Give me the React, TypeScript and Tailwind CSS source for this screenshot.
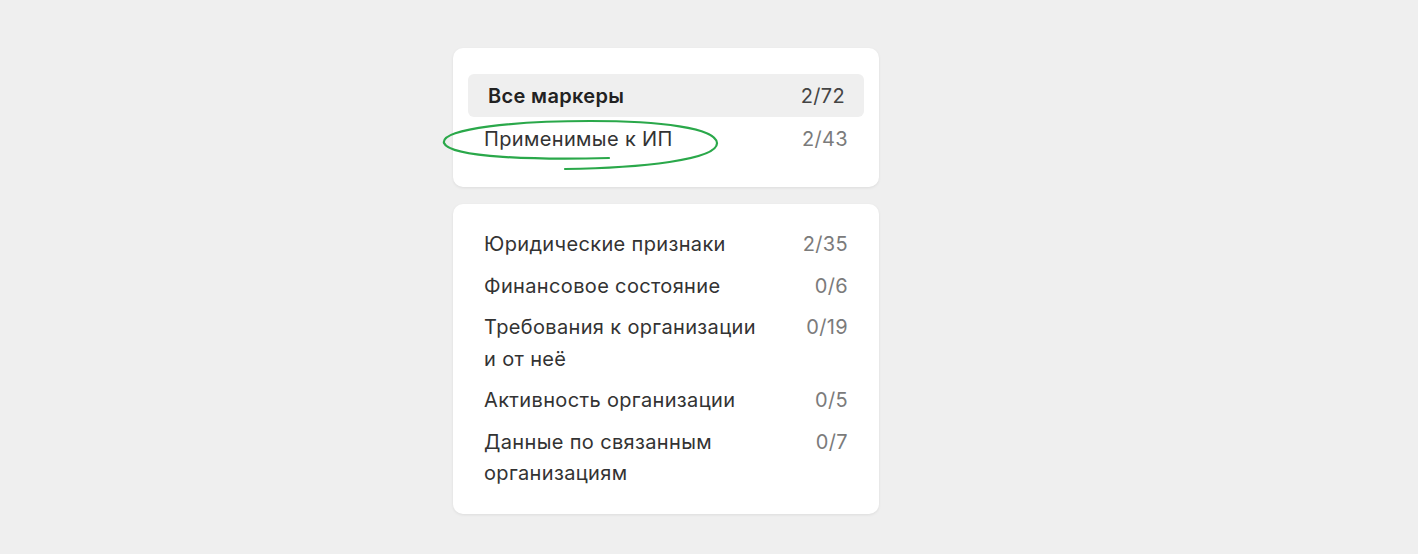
import React from "react";

type Row = { label: string; count: string };

const groups: Row[] = [
  { label: "Юридические признаки", count: "2/35" },
  { label: "Финансовое состояние", count: "0/6" },
  { label: "Требования к организации и от неё", count: "0/19" },
  { label: "Активность организации", count: "0/5" },
  { label: "Данные по связанным организациям", count: "0/7" },
];

function Ellipse() {
  return (
    <svg
      className="pointer-events-none absolute left-0 top-0 overflow-visible"
      width="1"
      height="1"
    >
      <path
        d="M156 110 C 87 112, -3 110, -9 95 C -13 80, 67 73, 137 73 C 207 73, 263 80, 264 95 C 265 112, 187 120, 112 121"
        fill="none"
        stroke="#2aa84a"
        strokeWidth="2.2"
        strokeLinecap="round"
      />
    </svg>
  );
}

export default function App() {
  return (
    <div
      className="min-h-[554px] bg-[#efefef] pl-[453px] pt-[48px] text-[#333333]"
      style={{ fontFamily: "Inter, 'Noto Sans', sans-serif" }}
    >
      <div className="flex w-[426px] flex-col gap-[17px]">
        <div className="relative rounded-[10px] bg-white px-[15px] pb-[26px] pt-[26px] shadow-[0_1px_3px_rgba(0,0,0,0.08)]">
          <div className="flex h-[43px] items-center justify-between rounded-[6px] bg-[#efefef] pl-[20px] pr-[19px] text-[20px] tracking-[0.35px]">
            <span className="font-semibold text-[#222222]">Все маркеры</span>
            <span className="text-[#444444]">2/72</span>
          </div>
          <div className="flex h-[44px] items-center justify-between px-[16px] text-[20px] tracking-[0.35px]">
            <span>Применимые к ИП</span>
            <span className="text-[#7b7b7b]">2/43</span>
          </div>
          <Ellipse />
        </div>

        <div className="flex flex-col gap-[10px] rounded-[10px] bg-white px-[31px] pb-[24px] pt-[25px] text-[20px] leading-[31.5px] tracking-[0.35px] shadow-[0_1px_3px_rgba(0,0,0,0.08)]">
          {groups.map((g) => (
            <div key={g.label} className="flex justify-between gap-4">
              <span className="max-w-[285px]">{g.label}</span>
              <span className="text-[#7b7b7b]">{g.count}</span>
            </div>
          ))}
        </div>
      </div>
    </div>
  );
}
